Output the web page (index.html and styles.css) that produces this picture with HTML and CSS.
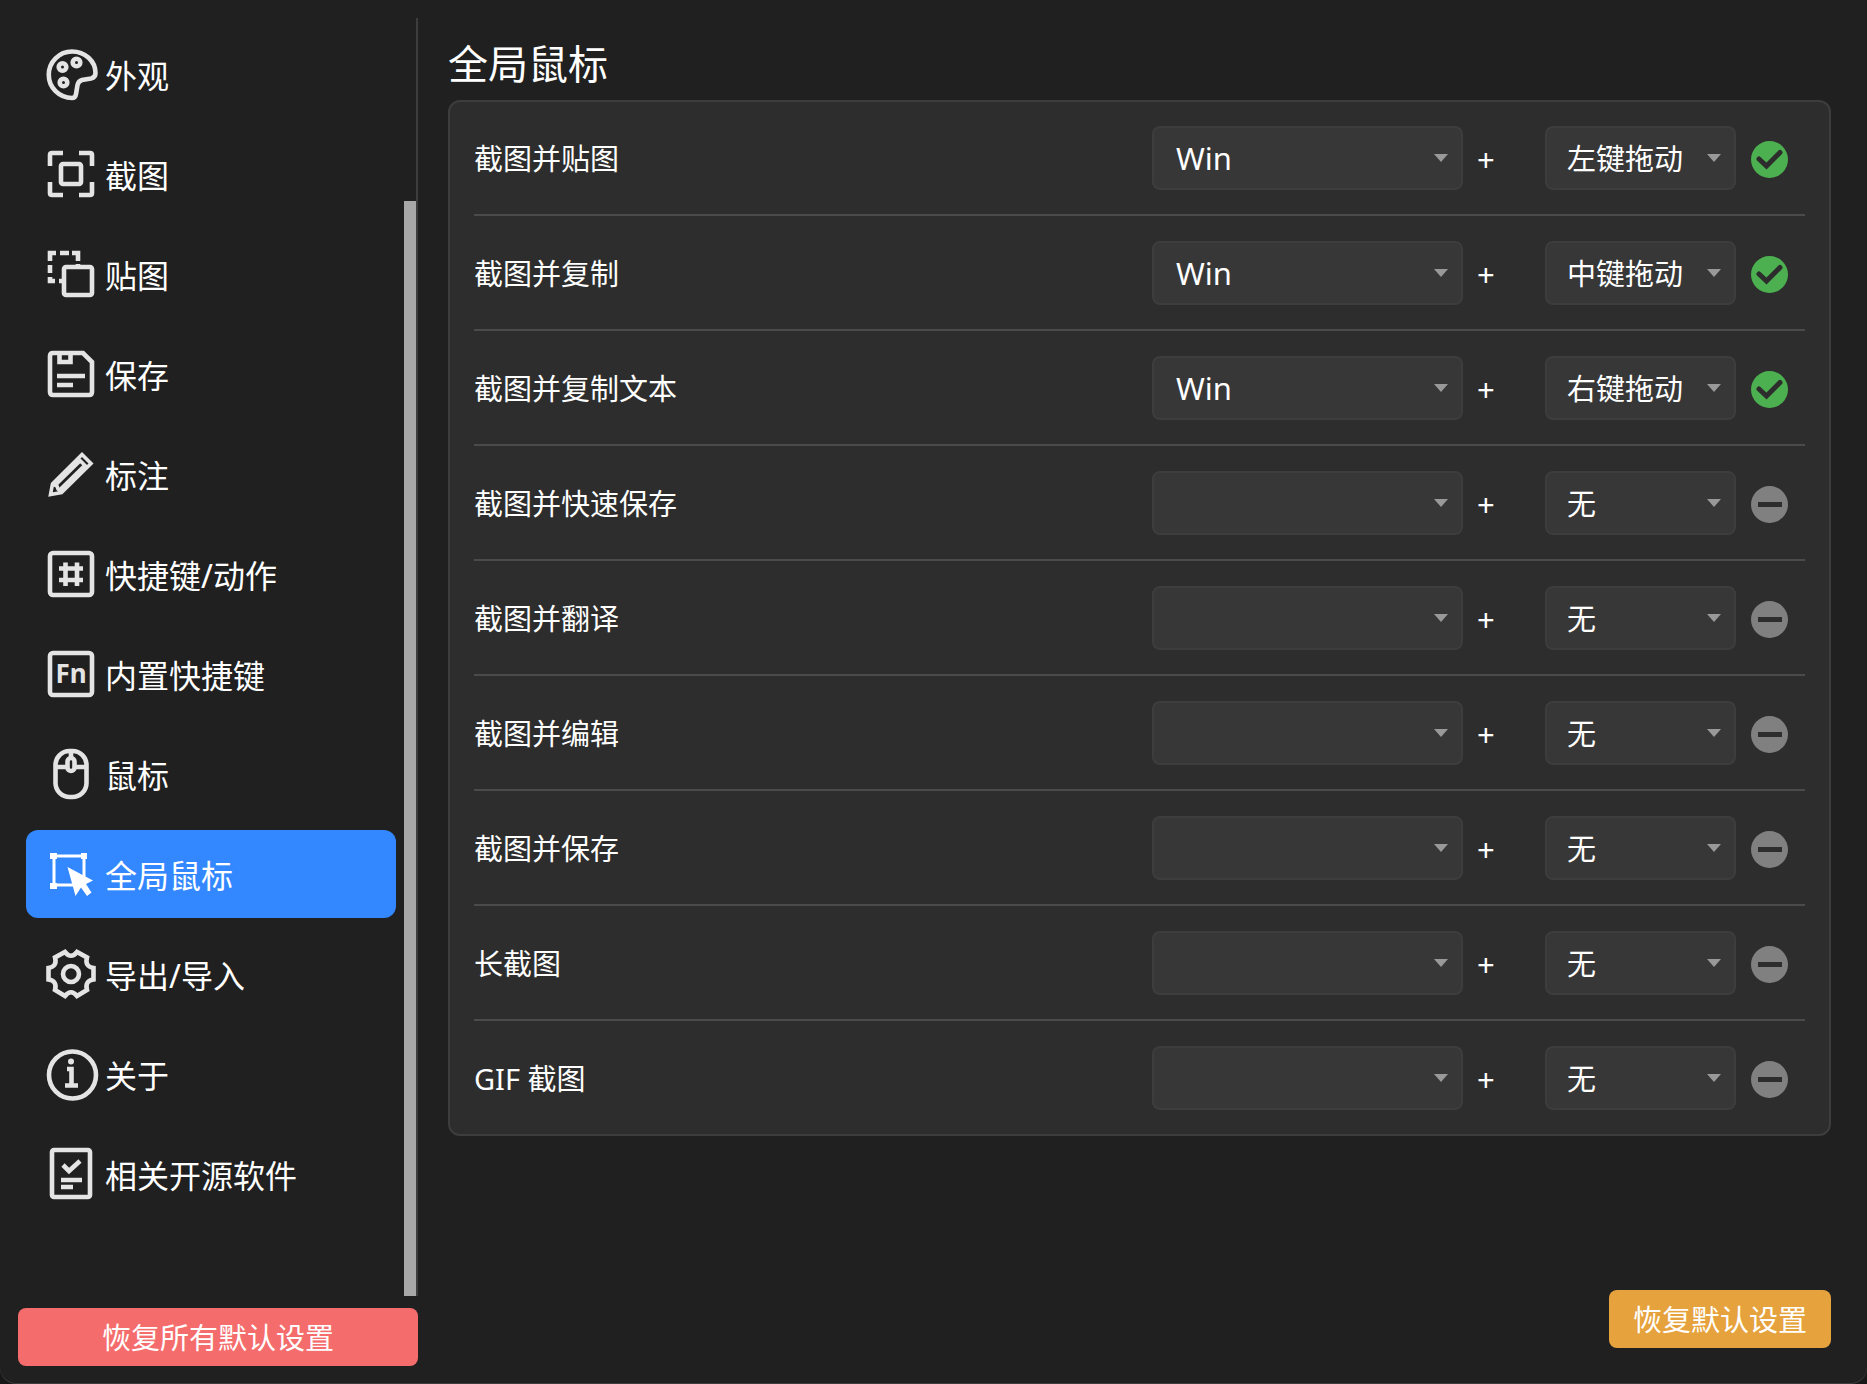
FILE: index.html
```html
<!DOCTYPE html>
<html lang="zh-CN">
<head>
<meta charset="utf-8">
<title>全局鼠标</title>
<link rel="stylesheet" href="styles.css">
</head>
<body>
<div class="window">
  <aside class="sidebar">
    <div class="sidebar-scroll">
      <nav class="nav">
        <a class="nav-item" href="#appearance">
          <svg class="nav-icon" viewBox="0 0 50 50"><path d="M26 2.500A23.200 23.200 0 0 0 26 49Q29.500 49 30 45L31.500 36Q32.500 32 36 31L45 29.500Q49.500 28.500 49.500 24A23.500 21.500 0 0 0 26 2.500Z"/><circle cx="16.500" cy="18" r="3.800"/><circle cx="30.500" cy="13.500" r="3.800"/><circle cx="17.500" cy="33.500" r="3.800"/></svg>
          <span>外观</span>
        </a>
        <a class="nav-item" href="#capture">
          <svg class="nav-icon" viewBox="0 0 50 50"><path d="M17 4H6Q4 4 4 6V17M33 4H44Q46 4 46 6V17M4 33V44Q4 46 6 46H17M46 33V44Q46 46 44 46H33"/><rect x="15" y="15" width="20" height="20" rx="2"/></svg>
          <span>截图</span>
        </a>
        <a class="nav-item" href="#pin">
          <svg class="nav-icon" viewBox="0 0 50 50"><path d="M4 12V4H10M14 4H23M26 4H32V12M4 16V24M4 28V32H9M13 32H18M32 15V19"/><rect x="18" y="18" width="28" height="28" rx="2"/></svg>
          <span>贴图</span>
        </a>
        <a class="nav-item" href="#save">
          <svg class="nav-icon" viewBox="0 0 50 50"><path d="M7 4H37L46 13V43Q46 46 43 46H7Q4 46 4 43V7Q4 4 7 4ZM13.500 4V13H24.500V4M11 27H39M11 36H27"/></svg>
          <span>保存</span>
        </a>
        <a class="nav-item" href="#annotate">
          <svg class="nav-icon pencil" viewBox="0 0 50 50"><path d="M4.500 45.500L6.500 35L36 5.500L45 14.500L15.500 43.500ZM32 9.500L41 18.500M9.500 36L33 13M14 40.500L37.500 17.500M6.500 35L11 37L12 40L15.500 43.500"/></svg>
          <span>标注</span>
        </a>
        <a class="nav-item" href="#hotkeys">
          <svg class="nav-icon" viewBox="0 0 50 50"><rect x="4" y="4" width="42" height="42" rx="3"/><path d="M19.500 13.500V37M31 13.500V37M13 19.500H37M13 31H37"/></svg>
          <span>快捷键/动作</span>
        </a>
        <a class="nav-item" href="#builtin">
          <svg class="nav-icon" viewBox="0 0 50 50"><rect x="4" y="4" width="42" height="42" rx="3"/><text class="fn" x="25" y="34" text-anchor="middle">Fn</text></svg>
          <span>内置快捷键</span>
        </a>
        <a class="nav-item" href="#mouse">
          <svg class="nav-icon" viewBox="0 0 50 50"><rect x="9.500" y="2" width="31" height="46" rx="14"/><path d="M25 2V9M9.500 18H21M29 18H40.500"/><rect x="21.500" y="9" width="7" height="13" rx="3.500"/></svg>
          <span>鼠标</span>
        </a>
        <a class="nav-item active" href="#global-mouse" aria-current="page">
          <svg class="nav-icon" viewBox="0 0 50 50"><path class="frame" d="M8 7H38V36H8Z"/><path class="solid" d="M4 4H11V10H4ZM35 4H41V10H35ZM4 34H11V40H4Z"/><path class="solid" d="M21.500 18L47 31.500L40 35L45.500 43.500L41 47L35 38.500L29.500 47Z"/></svg>
          <span>全局鼠标</span>
        </a>
        <a class="nav-item" href="#transfer">
          <svg class="nav-icon" viewBox="0 0 50 50"><path d="M19 3Q25 10.500 31 3L41 8.500Q38.500 17.500 47.500 19V30.500Q38.500 32 41 41L31 47Q25 39.500 19 47L9 41Q11.500 32 2.500 30.500V19Q11.500 17.500 9 8.500Z"/><circle cx="25" cy="25" r="8"/></svg>
          <span>导出/导入</span>
        </a>
        <a class="nav-item" href="#about">
          <svg class="nav-icon" viewBox="0 0 50 50"><circle cx="26.500" cy="26" r="23.500"/><circle class="solid" cx="25" cy="12.500" r="3"/><path d="M21 20H25.500V36M19 36.500H32"/></svg>
          <span>关于</span>
        </a>
        <a class="nav-item" href="#opensource">
          <svg class="nav-icon" viewBox="0 0 50 50"><rect x="6" y="1" width="38" height="47" rx="2"/><path d="M17 16L23 22L34 12M15 31H36M15 38H27"/></svg>
          <span>相关开源软件</span>
        </a>
      </nav>
      <div class="scrollbar"><div class="thumb"></div></div>
    </div>
    <button class="button danger" type="button">恢复所有默认设置</button>
  </aside>

  <main class="content">
    <h1 class="title">全局鼠标</h1>
    <ul class="card">
      <li class="row"><span class="name">截图并贴图</span><span class="select wide"><select aria-label="截图并贴图 修饰键"><option>Win</option></select></span><span class="plus">+</span><span class="select"><select aria-label="截图并贴图 鼠标动作"><option>左键拖动</option></select></span><svg class="status ok" viewBox="0 0 37 37"><circle cx="18.500" cy="18.500" r="18.500"/><path d="M8 18L15.500 25L29 11.500"/></svg></li>
      <li class="row"><span class="name">截图并复制</span><span class="select wide"><select aria-label="截图并复制 修饰键"><option>Win</option></select></span><span class="plus">+</span><span class="select"><select aria-label="截图并复制 鼠标动作"><option>中键拖动</option></select></span><svg class="status ok" viewBox="0 0 37 37"><circle cx="18.500" cy="18.500" r="18.500"/><path d="M8 18L15.500 25L29 11.500"/></svg></li>
      <li class="row"><span class="name">截图并复制文本</span><span class="select wide"><select aria-label="截图并复制文本 修饰键"><option>Win</option></select></span><span class="plus">+</span><span class="select"><select aria-label="截图并复制文本 鼠标动作"><option>右键拖动</option></select></span><svg class="status ok" viewBox="0 0 37 37"><circle cx="18.500" cy="18.500" r="18.500"/><path d="M8 18L15.500 25L29 11.500"/></svg></li>
      <li class="row"><span class="name">截图并快速保存</span><span class="select wide"><select aria-label="截图并快速保存 修饰键"><option></option></select></span><span class="plus">+</span><span class="select"><select aria-label="截图并快速保存 鼠标动作"><option>无</option></select></span><svg class="status off" viewBox="0 0 37 37"><circle cx="18.500" cy="18.500" r="18.500"/><path d="M7 18.500H31"/></svg></li>
      <li class="row"><span class="name">截图并翻译</span><span class="select wide"><select aria-label="截图并翻译 修饰键"><option></option></select></span><span class="plus">+</span><span class="select"><select aria-label="截图并翻译 鼠标动作"><option>无</option></select></span><svg class="status off" viewBox="0 0 37 37"><circle cx="18.500" cy="18.500" r="18.500"/><path d="M7 18.500H31"/></svg></li>
      <li class="row"><span class="name">截图并编辑</span><span class="select wide"><select aria-label="截图并编辑 修饰键"><option></option></select></span><span class="plus">+</span><span class="select"><select aria-label="截图并编辑 鼠标动作"><option>无</option></select></span><svg class="status off" viewBox="0 0 37 37"><circle cx="18.500" cy="18.500" r="18.500"/><path d="M7 18.500H31"/></svg></li>
      <li class="row"><span class="name">截图并保存</span><span class="select wide"><select aria-label="截图并保存 修饰键"><option></option></select></span><span class="plus">+</span><span class="select"><select aria-label="截图并保存 鼠标动作"><option>无</option></select></span><svg class="status off" viewBox="0 0 37 37"><circle cx="18.500" cy="18.500" r="18.500"/><path d="M7 18.500H31"/></svg></li>
      <li class="row"><span class="name">长截图</span><span class="select wide"><select aria-label="长截图 修饰键"><option></option></select></span><span class="plus">+</span><span class="select"><select aria-label="长截图 鼠标动作"><option>无</option></select></span><svg class="status off" viewBox="0 0 37 37"><circle cx="18.500" cy="18.500" r="18.500"/><path d="M7 18.500H31"/></svg></li>
      <li class="row"><span class="name">GIF 截图</span><span class="select wide"><select aria-label="GIF 截图 修饰键"><option></option></select></span><span class="plus">+</span><span class="select"><select aria-label="GIF 截图 鼠标动作"><option>无</option></select></span><svg class="status off" viewBox="0 0 37 37"><circle cx="18.500" cy="18.500" r="18.500"/><path d="M7 18.500H31"/></svg></li>
    </ul>
    <button class="button warning" type="button">恢复默认设置</button>
  </main>
</div>
</body>
</html>
```
FILE: styles.css
```css
* {
  box-sizing: border-box;
}

body {
  margin: 0;
  background: #181818;
  color: #fff;
  font-family: "Noto Sans", "Noto Sans CJK SC", sans-serif;
  font-size: 29px;
  line-height: 40px;
}

.window {
  display: flex;
  gap: 30px;
  min-height: 100vh;
  padding: 18px 36px 18px 18px;
  background: #202020;
  box-shadow: inset 0 -1px #3d3d3d;
  border-radius: 0 0 16px 16px;
}

.sidebar {
  display: flex;
  flex: 0 0 400px;
  flex-direction: column;
  gap: 12px;
}

.sidebar-scroll {
  display: flex;
  flex: 1;
  border-right: 2px solid #3d3d3d;
}

.nav {
  display: flex;
  flex: 1;
  flex-direction: column;
  gap: 12px;
  padding: 12px 8px;
}

.nav-item {
  display: flex;
  align-items: center;
  gap: 9px;
  height: 88px;
  padding: 0 20px;
  border-radius: 12px;
  color: #fff;
  font-size: 32px;
  text-decoration: none;
  white-space: nowrap;
}

.nav-item span {
  padding-top: 4px;
}

.nav-item.active {
  background: #3388ff;
}

.nav-icon {
  flex: none;
  width: 50px;
  height: 50px;
  overflow: visible;
  color: #e4e4e4;
  fill: none;
  stroke: currentColor;
  stroke-width: 4.6;
}

.active .nav-icon {
  color: #fff;
}

.nav-icon .solid {
  fill: currentColor;
  stroke: none;
}

.nav-icon .frame {
  stroke-width: 3;
}

.nav-icon .fn {
  fill: currentColor;
  stroke: none;
  font-size: 26px;
  font-weight: 700;
}

.nav-icon.pencil {
  stroke-width: 3.6;
}

.scrollbar {
  display: flex;
  width: 12px;
  padding-top: 183px;
}

.thumb {
  flex: 1;
  background: #a8a8a8;
}

.button {
  height: 58px;
  padding: 2px 24px 0;
  border: 0;
  border-radius: 8px;
  color: #fff;
  font: inherit;
}

.danger {
  background: #f56c6c;
}

.warning {
  align-self: flex-end;
  margin-top: auto;
  background: #e6a23c;
}

.content {
  display: flex;
  flex: 1;
  flex-direction: column;
  padding-bottom: 18px;
}

.title {
  margin: 17px 0 7px;
  font-size: 40px;
  font-weight: 400;
  line-height: 58px;
}

.card {
  margin: 0;
  padding: 24px;
  border: 2px solid #3d3d3d;
  border-radius: 12px;
  background: #2d2d2d;
  list-style: none;
}

.row {
  display: flex;
  align-items: center;
  padding-right: 17px;
}

.row:not(:last-child) {
  margin-bottom: 25px;
  padding-bottom: 24px;
  border-bottom: 2px solid #4b4b4b;
}

.name {
  flex: 1;
  padding-top: 2px;
}

.select {
  display: grid;
  width: 191px;
  align-items: center;
}

.select.wide {
  width: 311px;
}

.select select {
  grid-area: 1 / 1;
  width: 100%;
  height: 64px;
  padding: 2px 44px 0 20px;
  border: 2px solid #3d3d3d;
  border-radius: 8px;
  background: #373737;
  color: #fff;
  font: inherit;
  appearance: none;
}

.select.wide select {
  padding-top: 0;
  padding-left: 22px;
  font-size: 31px;
}

.select::after {
  grid-area: 1 / 1;
  justify-self: end;
  width: 14px;
  height: 8px;
  margin-right: 15px;
  background: #999;
  clip-path: polygon(0 0, 100% 0, 50% 100%);
  content: "";
  pointer-events: none;
}

.plus {
  width: 82px;
  padding-top: 2px;
  padding-left: 14px;
  font-size: 31px;
}

.status {
  width: 37px;
  height: 37px;
  margin-top: 3px;
  margin-left: 15px;
  fill: none;
  stroke: #2d2d2d;
  stroke-width: 5;
}

.status.ok {
  stroke-linecap: round;
}

.status.ok circle {
  fill: #4caf50;
  stroke: none;
}

.status.off circle {
  fill: #808080;
  stroke: none;
}
```
